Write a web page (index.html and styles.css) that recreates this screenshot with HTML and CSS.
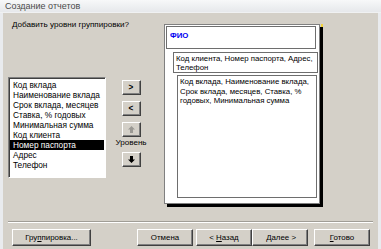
FILE: index.html
```html
<!DOCTYPE html>
<html>
  <head>
    <link rel="stylesheet" href="styles.css">
  </head>
  <body>
    <main class="window">
      <header class="titlebar">Создание отчетов</header>
      <section class="client">
        <div class="content">
          <div class="chooser">
            <p class="prompt">Добавить уровни группировки?</p>
            <div class="pick">
              <ul class="fields">
                <li>Код вклада</li>
                <li>Наименование вклада</li>
                <li>Срок вклада, месяцев</li>
                <li>Ставка, % годовых</li>
                <li>Минимальная сумма</li>
                <li>Код клиента</li>
                <li class="selected">Номер паспорта</li>
                <li>Адрес</li>
                <li>Телефон</li>
              </ul>
              <div class="movers">
                <button class="btn mover">&gt;</button>
                <button class="btn mover">&lt;</button>
                <button class="btn mover" disabled>
                  <svg width="7" height="7" viewBox="0 0 7 7"><path d="M3.5 0 L7 3.5 L5 3.5 L5 7 L2 7 L2 3.5 L0 3.5 Z" fill="#9a9893"/></svg>
                </button>
                <span class="level">Уровень</span>
                <button class="btn mover">
                  <svg width="7" height="7" viewBox="0 0 7 7"><path d="M2 0 L5 0 L5 3.5 L7 3.5 L3.5 7 L0 3.5 L2 3.5 Z" fill="#000"/></svg>
                </button>
              </div>
            </div>
          </div>
          <div class="preview">
            <div class="page">
              <div class="group">ФИО</div>
              <div class="band">Код клиента, Номер паспорта, Адрес, Телефон</div>
              <div class="detail">Код вклада, Наименование вклада, Срок вклада, месяцев, Ставка, % годовых, Минимальная сумма</div>
            </div>
            <span class="corner"></span>
          </div>
        </div>
        <div class="rule"></div>
        <div class="actions">
          <button class="btn action wide">Гру<u>п</u>пировка...</button>
          <button class="btn action cancel">Отмена</button>
          <button class="btn action back">&lt; <u>Н</u>азад</button>
          <button class="btn action">&nbsp;<u>Д</u>алее &gt;</button>
          <button class="btn action done"><u>Г</u>отово</button>
        </div>
      </section>
    </main>
  </body>
</html>
```

FILE: styles.css
```css
* {
  margin: 0;
  padding: 0;
  box-sizing: border-box;
}

html, body {
  width: 381px;
  height: 249px;
  overflow: hidden;
}

body {
  font-family: "Liberation Sans", Arial, sans-serif;
  font-size: 8.5px;
  color: #000;
  background: #d4d0c8;
}

ul {
  list-style: none;
}

u {
  text-decoration: underline;
}

.window {
  height: 249px;
  display: flex;
  flex-direction: column;
}

.titlebar {
  height: 13px;
  padding-left: 5px;
  line-height: 13px;
  font-size: 9px;
  color: #4b4b4b;
  background: linear-gradient(#f7f8f9, #e6e8eb);
  border-bottom: 1px solid #f0f1f2;
}

.client {
  flex: 1;
  border-left: 3px solid #e9ebee;
  border-right: 3px solid #e9ebee;
}

.content {
  display: flex;
  height: 204px;
  padding: 6px 0 0 5px;
}

.chooser {
  width: 156px;
}

.prompt {
  margin-left: 4px;
  line-height: 11px;
  font-size: 8.1px;
}

.pick {
  display: flex;
  margin-top: 47px;
}

.fields {
  width: 98px;
  height: 101px;
  padding: 2px 1px;
  background: #fff;
  border: 1px solid;
  border-color: #808080 #fff #fff #808080;
  box-shadow: inset 1px 1px #404040;
}

.fields li {
  height: 10px;
  line-height: 10px;
  padding-left: 3px;
  white-space: nowrap;
  font-size: 8.3px;
}

.fields .selected {
  background: #000;
  color: #fff;
}

.movers {
  width: 34px;
  margin-left: 8px;
  padding-top: 3px;
  display: flex;
  flex-direction: column;
  align-items: center;
}

.btn {
  font-family: inherit;
  font-size: 8.2px;
  color: #000;
  background: #d4d0c8;
  border: 1px solid;
  border-color: #fff #404040 #404040 #fff;
  box-shadow: inset -1px -1px #808080;
}

.mover {
  width: 19px;
  height: 15px;
  margin-bottom: 6px;
  display: flex;
  align-items: center;
  justify-content: center;
  font-weight: bold;
}

.level {
  margin-top: -6px;
  line-height: 11px;
  font-size: 8.1px;
  margin-bottom: 4px;
}

.preview {
  position: relative;
  margin-top: 5px;
}

.page {
  width: 156px;
  height: 180px;
  background: #fff;
  border: 1px solid #808080;
  box-shadow: 3px 3px 0 #000;
}

.corner {
  position: absolute;
  top: 0;
  left: 157px;
  width: 2px;
  height: 3px;
  background: #f2d33a;
}

.group {
  height: 23px;
  margin: 1px 3px 0 1px;
  padding: 4px 0 0 3px;
  border: 1px solid #6e6e6e;
  color: #0000f0;
  font-weight: bold;
  font-size: 7.8px;
  line-height: 10px;
}

.band {
  height: 21px;
  margin: 3px 1px 0 8px;
  padding: 1px 2px;
  border: 1px solid #6e6e6e;
  line-height: 9px;
  font-size: 7.8px;
}

.detail {
  height: 123px;
  margin: 2px 2px 0 12px;
  padding: 1px 2px;
  border: 1px solid #6e6e6e;
  line-height: 9.6px;
  font-size: 7.8px;
}

.rule {
  margin: 4px 5px 0 5px;
  height: 2px;
  border-top: 1px solid #a09d96;
  border-bottom: 1px solid #fff;
}

.actions {
  display: flex;
  padding: 6px 0 0 9px;
}

.action {
  width: 56px;
  height: 17px;
  font-size: 7.9px;
}

.action.wide {
  width: 79px;
}

.action.cancel {
  margin-left: 46px;
}

.action.back {
  margin-left: 3px;
}

.action.done {
  margin-left: 6px;
}
```
